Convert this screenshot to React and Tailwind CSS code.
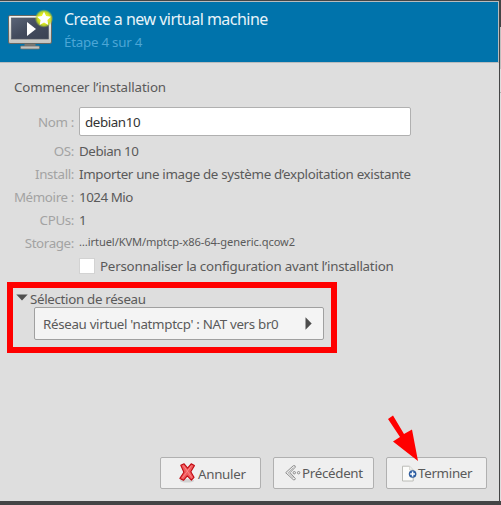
function Row({ label, children, className }) {
  return (
    <div className={`flex items-center ${className}`}>
      <div className="w-[74px] shrink-0 text-right tracking-[-0.36px] text-[#a3a3a3]">{label}</div>
      <div className="ml-[5px] text-[#5a5a5a]">{children}</div>
    </div>
  );
}

function MachineIcon() {
  return (
    <svg className="mt-[7px] ml-[7px] h-[43px] w-[48px] shrink-0" viewBox="7 9 48 43">
      <defs>
        <linearGradient id="screen" x1="0" y1="0" x2="1" y2="1">
          <stop offset="0" stopColor="#5a6477" />
          <stop offset="0.5" stopColor="#434b5d" />
          <stop offset="1" stopColor="#3a4253" />
        </linearGradient>
        <linearGradient id="frame" x1="0" y1="0" x2="0" y2="1">
          <stop offset="0" stopColor="#f4f4f2" />
          <stop offset="1" stopColor="#c4c4c0" />
        </linearGradient>
        <radialGradient id="glow">
          <stop offset="0.5" stopColor="#e4ee20" />
          <stop offset="0.75" stopColor="#c8dc20" stopOpacity="0.9" />
          <stop offset="1" stopColor="#a0c840" stopOpacity="0" />
        </radialGradient>
      </defs>
      <path d="M24.5 43h11v4h-11z" fill="#777773" />
      <rect x="20.5" y="46" width="19" height="3" rx="1" fill="#c2c2be" stroke="#70706c" strokeWidth="0.8" />
      <rect x="8.5" y="15.5" width="43" height="28" rx="1.5" fill="url(#frame)" stroke="#686863" />
      <rect x="11.5" y="18" width="37" height="21" fill="url(#screen)" stroke="#555b66" strokeWidth="0.7" />
      <path d="M27 22l9 7-9 7z" fill="#fff" />
      <circle cx="44" cy="18.5" r="9.3" fill="url(#glow)" />
      <path d="M44 11.7l2.1 4.4 4.8.7-3.5 3.3.9 4.8-4.3-2.3-4.3 2.3.9-4.8-3.5-3.3 4.8-.7z" fill="#fff" />
    </svg>
  );
}

function CancelIcon() {
  return (
    <svg className="h-[20px] w-[18px] shrink-0" viewBox="0 0 18 20">
      <ellipse cx="8" cy="17.7" rx="7" ry="1.7" fill="#777" opacity="0.25" />
      <path
        d="M1.8 2.2L5.1.8 8.6 5.2 12.2.8 15.4 2.6 11.8 8.7 15 14.3 12.4 17.2 8.3 12.8 4.5 17.3.9 15.4 4.9 9.2z"
        fill="#f05a5c" stroke="#c00a12" strokeWidth="1.1" strokeLinejoin="round"
      />
      <path d="M4.4 2.6l8.5 12M12.4 2.7L3.5 14.7" fill="none" stroke="#ff9291" strokeWidth="0.8" />
    </svg>
  );
}

function BackIcon() {
  return (
    <svg className="h-[16px] w-[16px] shrink-0" viewBox="0 0 16 16" fill="none" stroke="#8b8b8b">
      <path d="M8.3.7Q10.8.2 10.3 2.2L5 7.7l5.3 5.8q.2 1.8-2 1.2L.7 7.7z" fill="#f3f3f3" />
      <path d="M8.5 2.4L3.2 7.7l5.3 5.4" strokeWidth="0.7" />
      <circle cx="9.3" cy="7.7" r="1.2" />
      <circle cx="13.6" cy="7.7" r="1.2" />
    </svg>
  );
}

function FinishIcon() {
  return (
    <svg className="h-[17px] w-[16px] shrink-0" viewBox="0 0 16 17">
      <path d="M1.5 1.2h7L12.2 5v11H1.5z" fill="#fcfcfa" stroke="#bbbcb7" />
      <path d="M8.5 1.2V5h3.7" fill="#eeeeea" stroke="#d0d0cc" strokeWidth="0.7" />
      <circle cx="11.6" cy="9" r="3.6" fill="#2d60a8" stroke="#204a87" strokeWidth="0.5" />
      <path d="M9.2 9H14M11.6 6.6v4.8" stroke="#fff" strokeWidth="1.5" />
    </svg>
  );
}

function ActionButton({ children }) {
  return (
    <button className="flex h-8 w-[101px] items-center rounded-[2px] border border-[#b0b0b0] bg-[#efefef] tracking-[-0.3px] text-[#5a5a5a]">
      {children}
    </button>
  );
}

export default function App() {
  return (
    <div className="relative flex h-[505px] w-[501px] flex-col overflow-hidden bg-[#444546] font-['Noto_Sans',sans-serif] text-[13.33px] leading-[18px] whitespace-nowrap">
      <div className="mt-px flex h-[500px]">
        <div className="flex w-[499px] flex-col bg-[#dedede]">
          <header className="flex h-[62px] border-t border-r border-b border-[#b9bcbe] bg-[#0073ab]">
            <MachineIcon />
            <div className="ml-[9px] pt-[7px]">
              <h1 className="text-[16px] leading-[20px] tracking-[-0.51px] text-[#e8f3f9]">Create a new virtual machine</h1>
              <p className="mt-[4px] leading-[18px] tracking-[-0.24px] text-[#4ca6d6]">Étape 4 sur 4</p>
            </div>
          </header>
          <main className="flex flex-col text-[#5a5a5a]">
            <h2 className="mt-[15px] ml-[14px] tracking-[-0.13px]">Commencer l’installation</h2>
            <Row label="Nom :" className="mt-[11px] h-[29px]">
              <div className="flex h-[29px] w-[332px] items-center rounded-[2px] border border-[#b0b0b0] bg-white pl-[5px] tracking-[-0.4px] text-[#333]">debian10</div>
            </Row>
            <Row label="OS:" className="mt-[3px] h-[23px] tracking-[-0.42px]">Debian 10</Row>
            <Row label="Install:" className="h-[23px] tracking-[-0.32px]">Importer une image de système d’exploitation existante</Row>
            <Row label="Mémoire :" className="h-[23px] tracking-[-0.45px]">1024 Mio</Row>
            <Row label="CPUs:" className="h-[23px]">1</Row>
            <Row label="Storage:" className="h-[23px]">
              <span className="relative -top-px text-[11.1px] tracking-[-0.08px]">…irtuel/KVM/mptcp-x86-64-generic.qcow2</span>
            </Row>
            <label className="mt-[4px] ml-[79px] flex h-4 items-center tracking-[-0.22px]">
              <span className="mr-[5px] h-4 w-4 border border-[#d3d3d3] bg-white" />
              Personnaliser la configuration avant l’installation
            </label>
            <section className="mt-[8px] ml-[7px] h-[71px] w-[330px] border-[6px] border-[#f00] pt-[2px] pl-[3px]">
              <div className="flex h-[17px] items-center tracking-[-0.32px]">
                <svg className="mr-[2px] -mt-[3px] h-[7px] w-[12px]" viewBox="0 0 12 7"><path d="M.3.4h11.4L6 6.6z" fill="#505050" /></svg>
                Sélection de réseau
              </div>
              <button className="ml-[18px] flex h-[33px] w-[290px] items-center justify-between rounded-[2px] border border-[#a0a0a0] bg-[#f4f4f4] pr-[11px] pl-[8px] tracking-[-0.32px]">
                Réseau virtuel 'natmptcp' : NAT vers br0
                <svg className="h-[13px] w-[7px]" viewBox="0 0 7 13"><path d="M.5.3l6.2 6.2-6.2 6.2z" fill="#4c4c4c" /></svg>
              </button>
            </section>
          </main>
          <footer className="mt-auto mb-[12px] flex justify-end gap-3 pr-[12px]">
            <ActionButton><span className="ml-[18px]"><CancelIcon /></span><span className="mt-[2px] ml-[1px]">Annuler</span></ActionButton>
            <ActionButton><span className="ml-[11px]"><BackIcon /></span><span className="ml-[1px]">Précédent</span></ActionButton>
            <ActionButton><span className="ml-[14px]"><FinishIcon /></span><span className="ml-[1px]">Terminer</span></ActionButton>
          </footer>
        </div>
        <div className="ml-px flex w-px flex-col">
          <div className="h-[26px] bg-[#444546]" />
          <div className="h-[42px] bg-[#c0c0c0]" />
          <div className="h-[23px] bg-[#dedede]" />
          <div className="h-px bg-[#b0b0b0]" />
          <div className="grow bg-[#dedede]" />
        </div>
      </div>
      <svg className="absolute top-[415px] left-[386px] h-[47px] w-[34px]" viewBox="386 415 34 47">
        <path d="M388 419l5-3.5 11 18.5 8-4.5 6 31.5-25-19.5 7-4.5z" fill="#f00" />
      </svg>
    </div>
  );
}
